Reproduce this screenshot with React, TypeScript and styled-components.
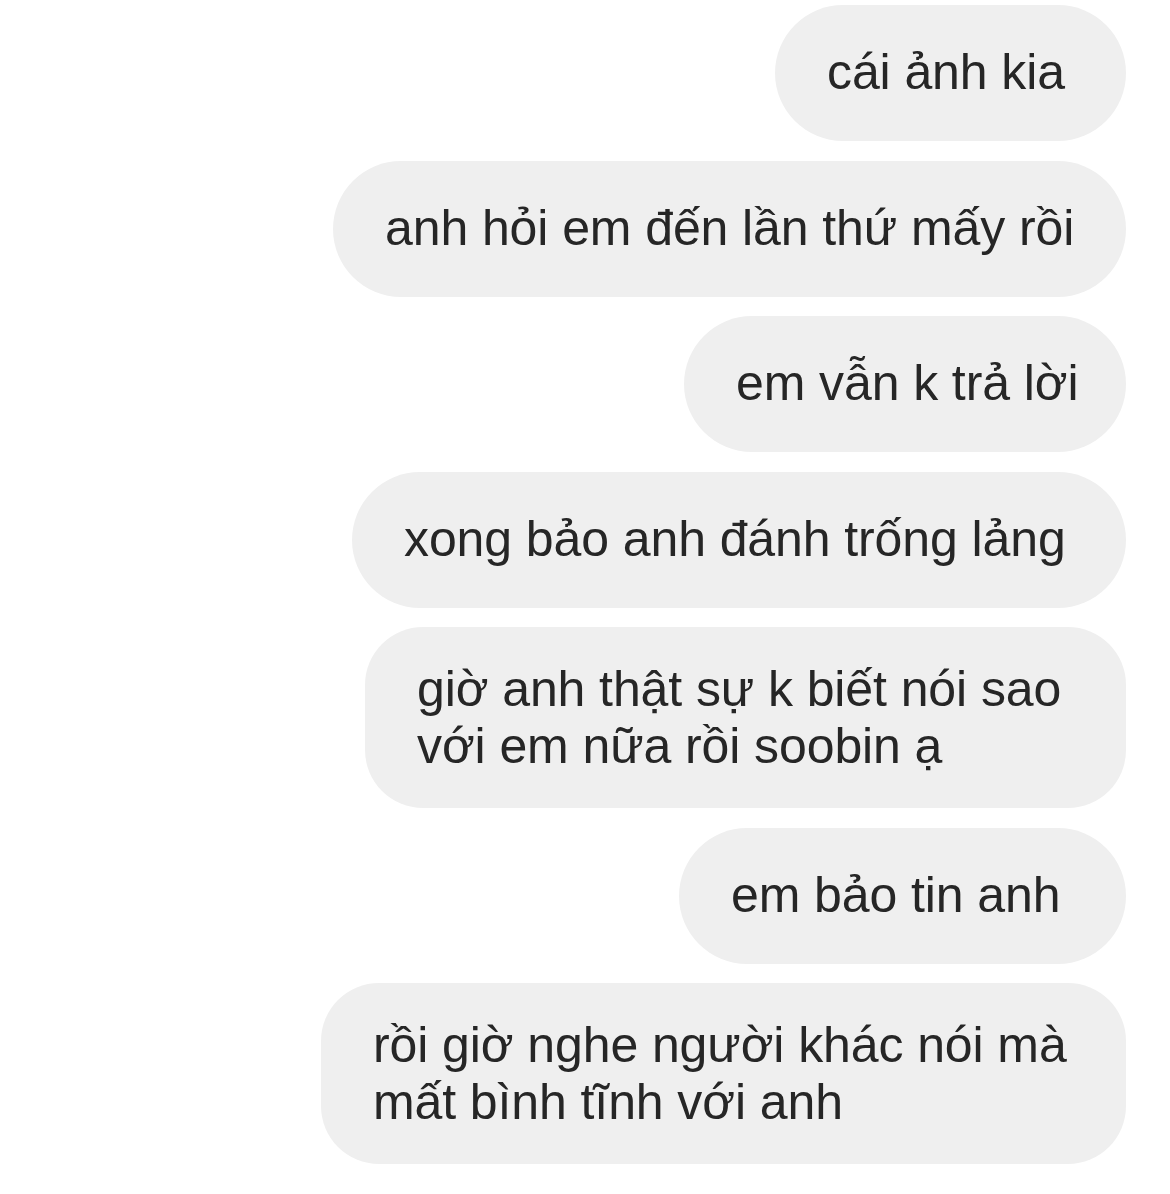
import React from "react";
import styled, { createGlobalStyle } from "styled-components";

const GlobalStyle = createGlobalStyle`
  html, body {
    margin: 0;
    padding: 0;
    background: #ffffff;
  }
  body {
    font-family: "Liberation Sans", Arial, sans-serif;
  }
`;

const Thread = styled.div`
  width: 1170px;
  min-height: 1194px;
  box-sizing: border-box;
  padding: 5px 44px 0 0;
  display: flex;
  flex-direction: column;
  align-items: flex-end;
  gap: 19.5px;
  background: #ffffff;
`;

const Bubble = styled.div<{ $width: number; $multi?: boolean }>`
  width: ${(p) => p.$width}px;
  box-sizing: border-box;
  background: #efefef;
  color: #262626;
  font-family: "Liberation Sans", Arial, sans-serif;
  font-size: 50px;
  line-height: 57px;
  letter-spacing: -0.1px;
  border-radius: ${(p) => (p.$multi ? "58px" : "68px")};
  padding: ${(p) => (p.$multi ? "34px 36px 33px 52px" : "39px 0 40px 52px")};
  white-space: ${(p) => (p.$multi ? "normal" : "nowrap")};
`;

const messages: { text: string; width: number; multi?: boolean }[] = [
  { text: "cái ảnh kia", width: 351 },
  { text: "anh hỏi em đến lần thứ mấy rồi", width: 793 },
  { text: "em vẫn k trả lời", width: 442 },
  { text: "xong bảo anh đánh trống lảng", width: 774 },
  { text: "giờ anh thật sự k biết nói sao với em nữa rồi soobin ạ", width: 761, multi: true },
  { text: "em bảo tin anh", width: 447 },
  { text: "rồi giờ nghe người khác nói mà mất bình tĩnh với anh", width: 805, multi: true },
];

export default function App() {
  return (
    <>
      <GlobalStyle />
      <Thread>
        {messages.map((m, i) => (
          <Bubble key={i} $width={m.width} $multi={m.multi}>
            {m.text}
          </Bubble>
        ))}
      </Thread>
    </>
  );
}
